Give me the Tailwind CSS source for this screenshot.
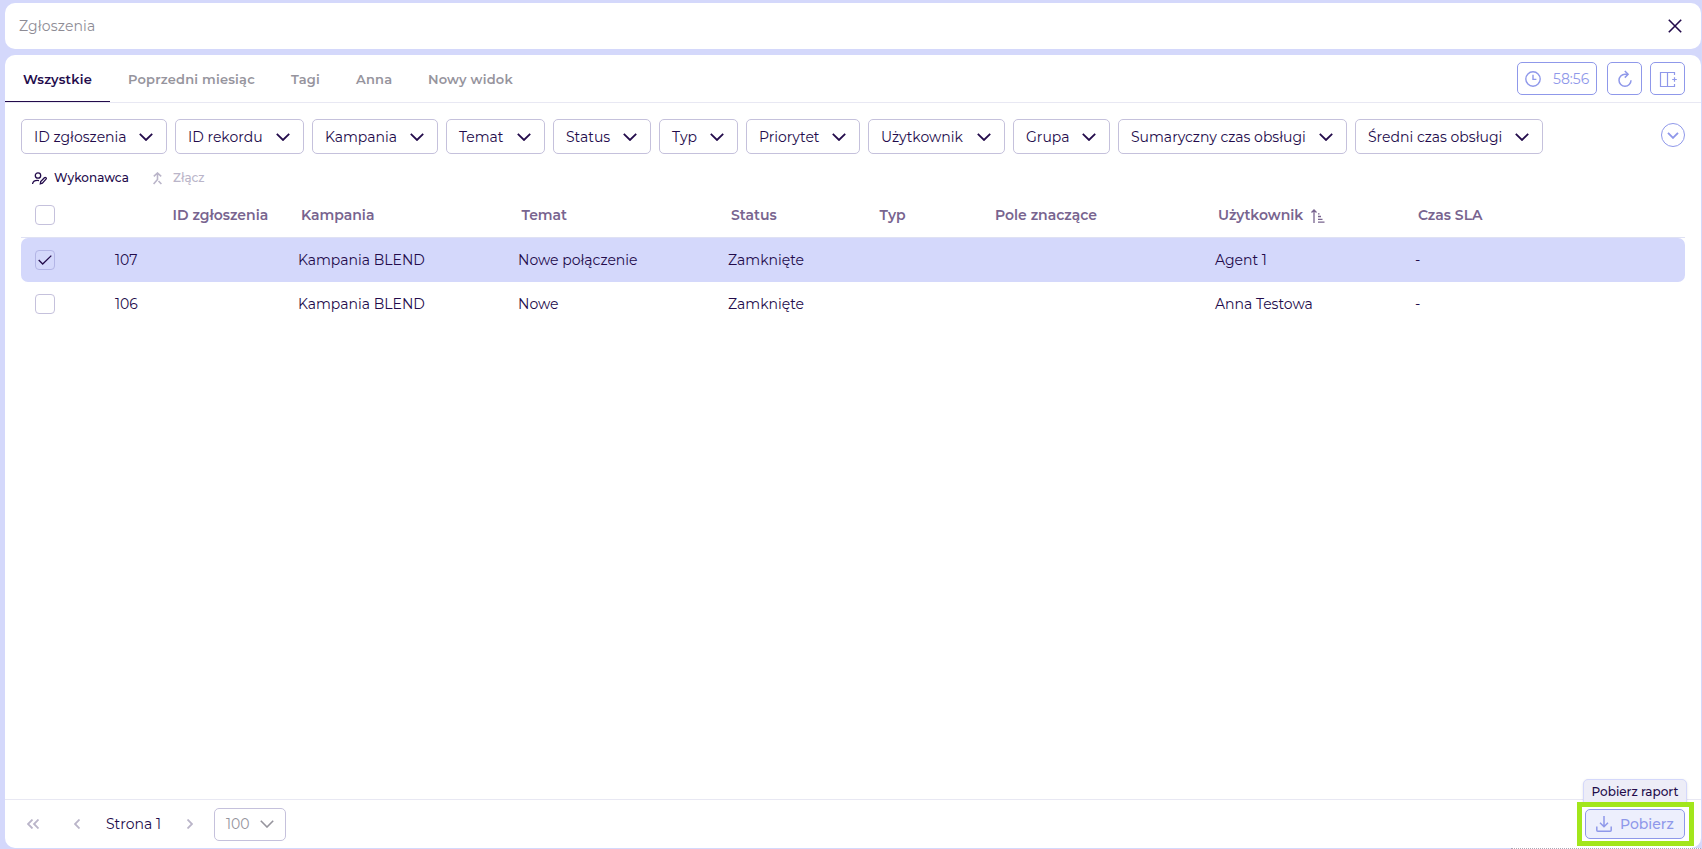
<!DOCTYPE html>
<html lang="pl">
<head>
  <meta charset="UTF-8" />
  <meta name="viewport" content="width=device-width, initial-scale=1.0"/>
  <title>Zgłoszenia</title>
  <script src="https://cdn.jsdelivr.net/npm/@tailwindcss/browser@4"></script>
</head>
<body class="bg-[#d4d8fb] text-[#230b4b] font-['Montserrat','Inter',sans-serif] text-sm h-screen overflow-hidden flex flex-col gap-1.5 pl-[5px] pr-px pt-[3px] pb-px whitespace-nowrap">

  <!-- NAGŁÓWEK -->
  <header class="h-[46px] shrink-0 bg-white rounded-[10px] flex items-center justify-between pl-3.5 pr-[19px]">
    <h1 class="text-[#8e8c95] tracking-[0.01em]">Zgłoszenia</h1>
    <svg class="w-3.5 h-3.5" viewBox="0 0 14 14" fill="none" stroke="currentColor" stroke-width="1.6"><path d="M.8.8l12.4 12.4M13.2.8L.8 13.2"/></svg>
  </header>

  <main class="flex-1 min-h-0 bg-white rounded-[10px] flex flex-col">
    <!-- ZAKŁADKI -->
    <nav class="h-12 shrink-0 border-b border-[#e8e8f3] flex justify-between text-[13px] font-semibold text-[#96949d]">
      <div class="flex h-[47px] tracking-[0.015em]">
        <a class="w-[105px] pl-[18px] pt-[15px] border-b border-[#230b4b] text-[#230b4b]">Wszystkie</a>
        <a class="w-[163px] pl-[18px] pt-[15px]">Poprzedni miesiąc</a>
        <a class="w-[65px] pl-[18px] pt-[15px]">Tagi</a>
        <a class="w-[72px] pl-[18px] pt-[15px]">Anna</a>
        <a class="pl-[18px] pt-[15px]">Nowy widok</a>
      </div>
      <div class="flex pt-[7px] pr-4 text-[#8f98ea] text-sm font-normal">
        <button class="w-20 h-[33px] mr-2.5 border border-[#8f98ea] rounded-[5px] flex items-center pl-[7px]">
          <svg class="w-4 h-4 mr-3" viewBox="0 0 16 16" fill="none" stroke="currentColor" stroke-width="1.4"><circle cx="8" cy="8" r="7.2"/><path d="M8 3.8V8.4h3.4"/></svg>
          <span>58:56</span>
        </button>
        <button class="w-[35px] h-[33px] mr-2 border border-[#8f98ea] rounded-[5px] flex items-center justify-center">
          <svg class="w-[18px] h-[18px]" viewBox="0 0 18 18" fill="none" stroke="currentColor" stroke-width="1.5"><path d="M12 4.300H9A6 6 0 1 0 15 10.300"/><path d="M8.800 1l3.300 3.300-3.300 3.300"/></svg>
        </button>
        <button class="w-[35px] h-[33px] border border-[#8f98ea] rounded-[5px] flex items-center justify-center">
          <svg class="w-[18px] h-[18px]" viewBox="0 0 18 18" fill="none" stroke="currentColor" stroke-width="1.2"><path d="M15.500 5V2.500h-14v14h14V14M8.500 2.500v14M15.500 7.200v4.600M13.200 9.500h4.600"/></svg>
        </button>
      </div>
    </nav>

    <!-- FILTRY -->
    <section class="h-[52px] shrink-0 pt-4 pl-4 pr-4 flex justify-between">
      <div id="filters" class="flex gap-2"></div>
      <button class="mt-1 w-6 h-6 border border-[#8f98ea] rounded-full text-[#8f98ea] flex items-center justify-center">
        <svg class="w-3 h-[7px]" viewBox="0 0 12 7" fill="none" stroke="currentColor" stroke-width="1.9"><path d="M1 .8l5 5 5-5"/></svg>
      </button>
    </section>

    <!-- AKCJE -->
    <section class="h-[46px] shrink-0 pl-[27px] flex items-center text-xs font-medium">
      <svg class="w-[15px] h-[13px] mr-[7px]" viewBox="0 0 15 13" fill="none" stroke="currentColor" stroke-width="1.3"><circle cx="6" cy="3.5" r="2.7"/><path d="M.5 12c.5-2.700 3-3.900 6.500-3.400M8.300 11.800l.4-2.200 3.700-3.900c1-.9 2.500.4 1.600 1.500l-3.600 4z"/></svg>
      <span class="w-[99px]">Wykonawca</span>
      <svg class="w-[9px] h-[13px] mr-[11px] text-[#bab5c9]" viewBox="0 0 9 13" fill="none" stroke="currentColor" stroke-width="1.6"><path d="M.8 4.300L4.500 1l3.700 3.300M4.500 1v6.500L.6 12M5.500 9L8.400 12"/></svg>
      <span class="text-[#bab5c9]">Złącz</span>
    </section>

    <!-- TABELA -->
    <section class="flex-1 pl-4 pr-4">
      <div class="h-[37px] flex text-[#78648f] font-semibold border-b border-[#dfe1f4]">
        <div class="w-[81px] pl-3.5 pt-1"><div class="w-5 h-5 border border-[#c5c1dc] rounded-[4px]"></div></div>
        <div class="w-[182px] pl-[70.5px] pt-1">ID zgłoszenia</div>
        <div class="w-[220px] pl-[17px] pt-1">Kampania</div>
        <div class="w-[210px] pl-[17.500px] pt-1">Temat</div>
        <div class="w-[148px] pl-[17px] pt-1">Status</div>
        <div class="w-[116px] pl-[17.500px] pt-1">Typ</div>
        <div class="w-[223px] pl-[17px] pt-1">Pole znaczące</div>
        <div class="w-[200px] pl-[17px] pt-1 flex">
          <span class="w-[93px]">Użytkownik</span>
          <svg class="w-3.5 h-3.5 mt-1" viewBox="0 0 14 14" fill="none" stroke="currentColor" stroke-width="1.3"><path d="M3 14V1M.5 3.500L3 1l2.500 2.500M7 4.800h1.500M7 7.500h3M7 10.300h4.500M7 13.200h6.500"/></svg>
        </div>
        <div class="pl-[17px] pt-1">Czas SLA</div>
      </div>
      <div id="rows"></div>
    </section>

    <!-- STOPKA -->
    <footer class="relative h-[49px] shrink-0 border-t border-[#e8e8f3] flex items-center pl-[22px] text-[#bab5c9]">
      <svg class="w-3 h-2.5 mr-[35px]" viewBox="0 0 12 10" fill="none" stroke="currentColor" stroke-width="1.8"><path d="M5.500.5L1 5l4.500 4.500M11.500.5L7 5l4.500 4.500"/></svg>
      <svg class="w-1.5 h-2.5 mr-[26px]" viewBox="0 0 6 10" fill="none" stroke="currentColor" stroke-width="1.8"><path d="M5.500.5L1 5l4.500 4.500"/></svg>
      <span class="w-[81px] text-[#230b4b]">Strona 1</span>
      <svg class="w-1.5 h-2.5 mr-[21px]" viewBox="0 0 6 10" fill="none" stroke="currentColor" stroke-width="1.8"><path d="M.5.5L5 5 .5 9.500"/></svg>
      <button class="w-[72px] h-[33px] border border-[#c5c1dc] rounded-[5px] flex items-center justify-between pl-[11px] pr-[11px] text-[#96949d]">
        <span>100</span>
        <svg class="w-3.5 h-2" viewBox="0 0 14 8" fill="none" stroke="currentColor" stroke-width="1.6"><path d="M.8.8L7 7l6.200-6.200"/></svg>
      </button>

      <!-- podpowiedź i wyróżniony przycisk pobierania -->
      <div class="absolute right-[14px] -top-[21px] w-[104px] h-7 bg-[#ededf7] border border-[#d4d8fb] rounded-[5px] text-[#230b4b] text-xs font-medium pt-1 text-center shadow-sm">Pobierz raport</div>
      <div class="absolute right-[7px] top-[2px] w-[117px] h-11 bg-white border-[5px] border-[#a2e61b] flex items-center pl-[3px]">
        <button class="w-[100px] h-[30px] bg-[#edeffd] border border-[#8f98ea] rounded-[5px] text-[#8f98ea] font-medium flex items-center pl-2.5">
          <svg class="w-4 h-4 mr-2" viewBox="0 0 16 16" fill="none" stroke="currentColor" stroke-width="1.5"><path d="M.8 10.500v3.700q0 1 1 1h12.400q1 0 1-1v-3.700M8 0v10.500M4 6.800l4 4 4-4"/></svg>
          <span>Pobierz</span>
        </button>
      </div>
      <!-- kropkowana linia pod stopką -->
      <div class="absolute right-0 -bottom-px w-[190px] bg-white border-b border-dotted border-[#aaa6b8]"></div>
    </footer>
  </main>

  <script>
    const filters = [
      ['ID zgłoszenia', 146], ['ID rekordu', 129], ['Kampania', 126], ['Temat', 99], ['Status', 98], ['Typ', 79],
      ['Priorytet', 114], ['Użytkownik', 137], ['Grupa', 97], ['Sumaryczny czas obsługi', 229], ['Średni czas obsługi', 188]
    ];
    document.getElementById('filters').innerHTML = filters.map(([name, width]) => `
      <button class="h-[35px] border border-[#c5c1dc] rounded-[5px] flex items-center justify-between pl-3 pr-[13px]" style="width:${width}px">
        <span>${name}</span>
        <svg class="w-3.5 h-2" viewBox="0 0 14 8" fill="none" stroke="currentColor" stroke-width="1.8"><path d="M.8.8L7 7l6.200-6.200"/></svg>
      </button>`).join('');

    const rows = [
      { id: 107, topic: 'Nowe połączenie', user: 'Agent 1', checked: true },
      { id: 106, topic: 'Nowe', user: 'Anna Testowa', checked: false }
    ];
    document.getElementById('rows').innerHTML = rows.map(r => `
      <div class="h-11 flex items-center rounded-[7px] ${r.checked ? 'bg-[#d4d8fb]' : ''}">
        <div class="w-[81px] pl-3.5">
          <div class="w-5 h-5 border rounded-[4px] flex items-center justify-center ${r.checked ? 'border-[#b3b5e6]' : 'border-[#c5c1dc]'}">
            ${r.checked ? '<svg class="w-3.5 h-2.5" viewBox="0 0 14 10" fill="none" stroke="currentColor" stroke-width="1.3"><path d="M.7 5l4 4L13.300.6"/></svg>' : ''}
          </div>
        </div>
        <div class="w-[182px] pl-[13px]">${r.id}</div>
        <div class="w-[220px] pl-3.5">Kampania BLEND</div>
        <div class="w-[210px] pl-3.5">${r.topic}</div>
        <div class="w-[148px] pl-3.5">Zamknięte</div>
        <div class="w-[116px]"></div>
        <div class="w-[223px]"></div>
        <div class="w-[200px] pl-3.5">${r.user}</div>
        <div class="pl-3.5">-</div>
      </div>`).join('');
  </script>
</body>
</html>
